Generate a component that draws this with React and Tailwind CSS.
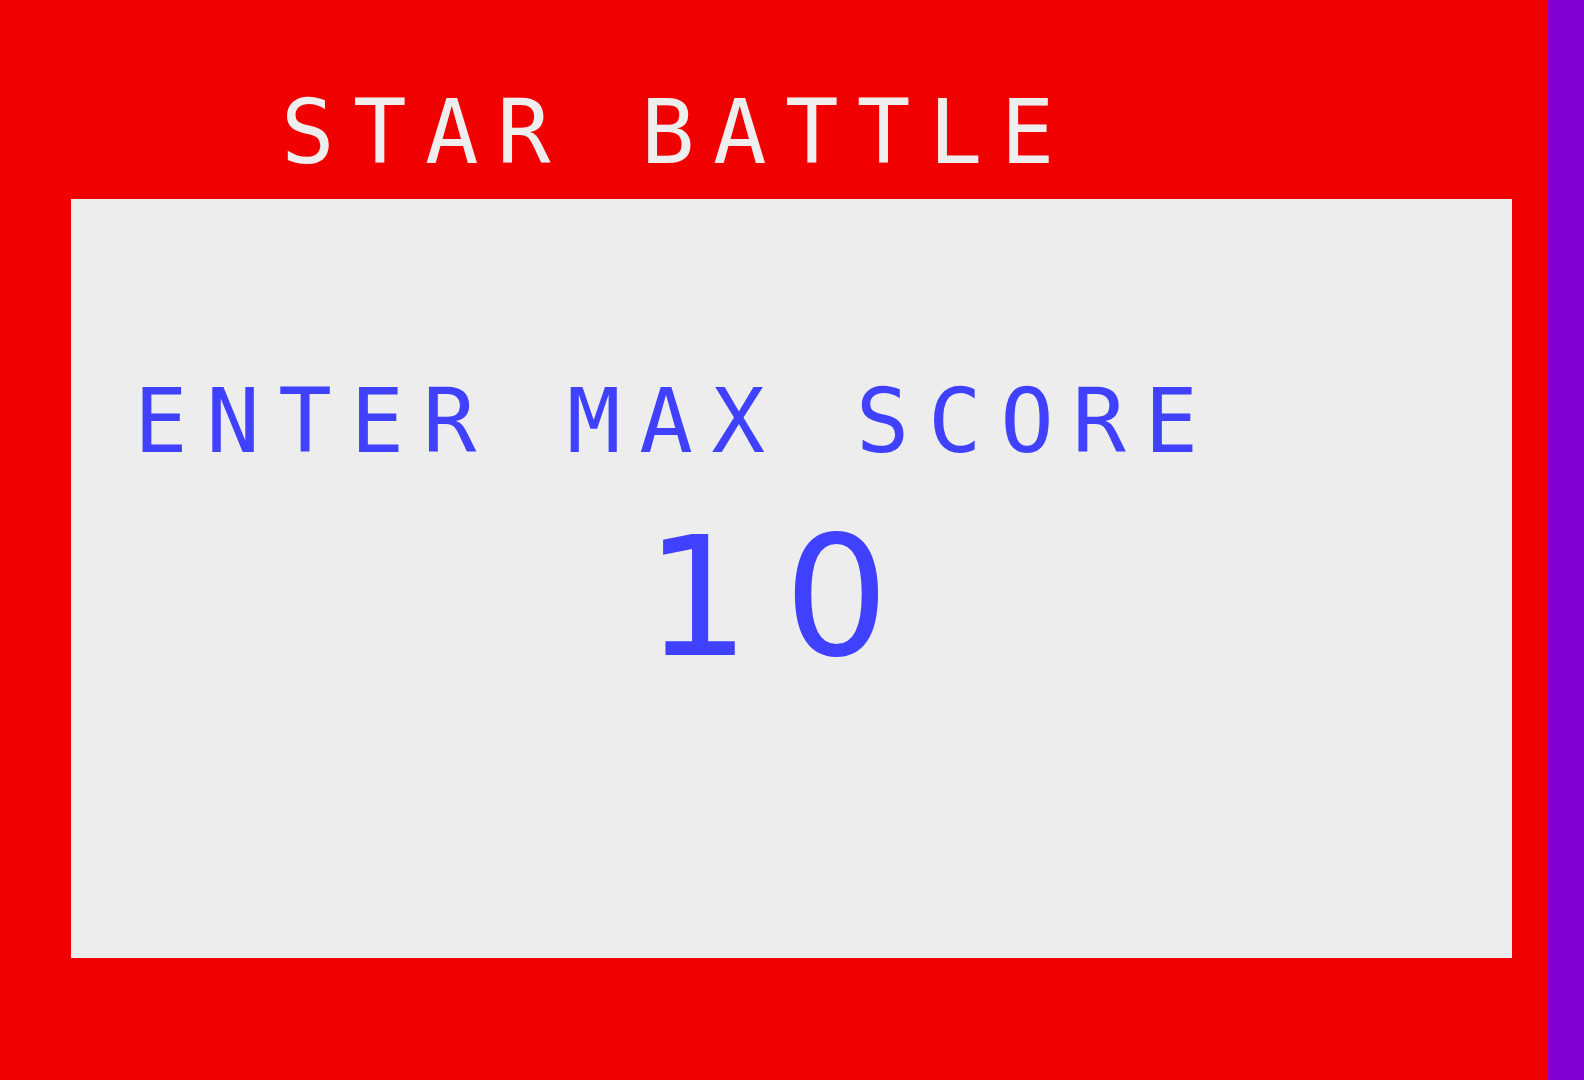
import React from "react";

const MONO = "font-['DejaVu_Sans_Mono',monospace] font-normal leading-none whitespace-pre";

export default function App() {
  return (
    <div className="flex h-[1080px] w-full overflow-hidden">
      {/* game screen */}
      <div className="flex w-[1548px] flex-col bg-[#f00000]">
        <div className={`${MONO} pl-[281px] pt-[88px] text-[89px] tracking-[18.4px] text-[#eeeeee]`}>
          STAR BATTLE
        </div>

        <div className="ml-[71px] mt-[22px] flex h-[759px] w-[1441px] flex-col bg-[#ededed]">
          <div className={`${MONO} pl-[63px] pt-[178px] text-[89px] tracking-[18.6px] text-[#4040ff]`}>
            ENTER MAX SCORE
          </div>
          <div className="pl-[574px] pt-[50px] font-['DejaVu_Sans',sans-serif] text-[165px] leading-none tracking-[34px] whitespace-pre text-[#4040ff]">
            10
          </div>
        </div>
      </div>

      {/* side border */}
      <div className="flex-1 bg-[#8200d2]" />
    </div>
  );
}
